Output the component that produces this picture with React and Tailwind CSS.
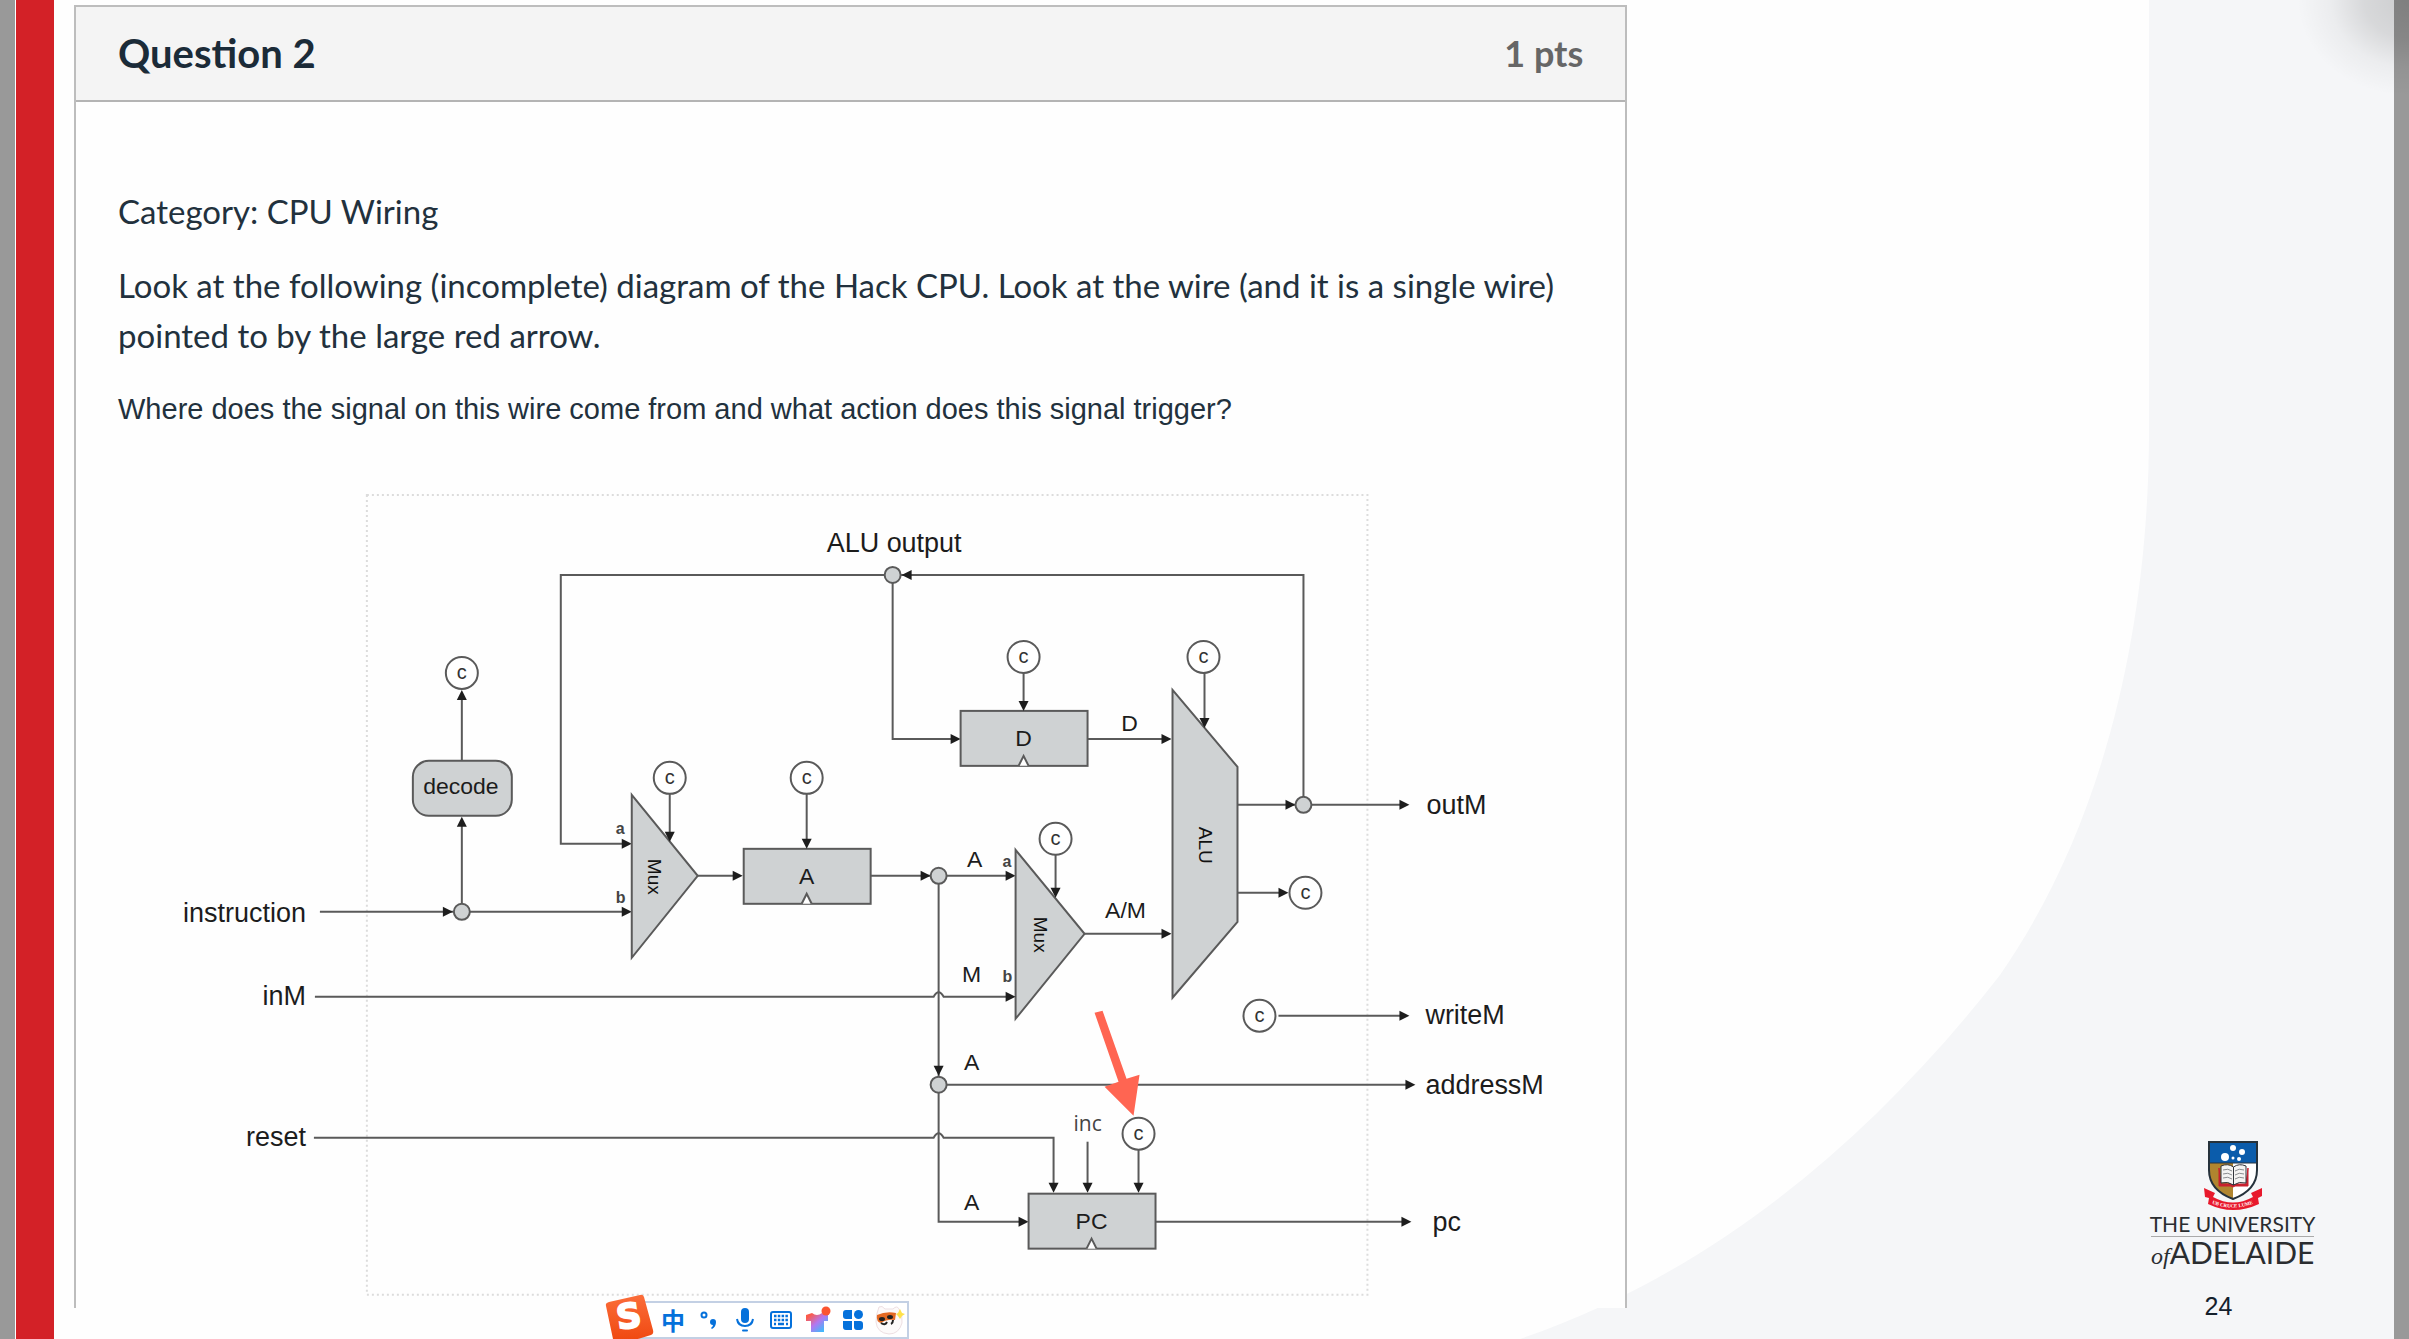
import React from "react";

const LINE = "#5a5a5a";
const FILL = "#cfd2d3";

const HEADS = {
  r: (x, y) => `${x},${y} ${x - 10},${y - 5} ${x - 10},${y + 5}`,
  l: (x, y) => `${x},${y} ${x + 10},${y - 5} ${x + 10},${y + 5}`,
  d: (x, y) => `${x},${y} ${x - 5},${y - 10} ${x + 5},${y - 10}`,
  u: (x, y) => `${x},${y} ${x - 5},${y + 10} ${x + 5},${y + 10}`,
};

function Head({ x, y, dir }) {
  return <polygon points={HEADS[dir](x, y)} fill="#1d1d1d" />;
}

function Wire({ d }) {
  return <path d={d} fill="none" stroke={LINE} strokeWidth="2" />;
}

function Node({ x, y }) {
  return <circle cx={x} cy={y} r="8" fill={FILL} stroke={LINE} strokeWidth="2" />;
}

function Control({ x, y }) {
  return (
    <g>
      <circle cx={x} cy={y} r="16" fill="#fff" stroke={LINE} strokeWidth="2" />
      <text x={x} y={y + 6} fontSize="20" textAnchor="middle" fill="#333">c</text>
    </g>
  );
}

function Register({ x, y, label }) {
  return (
    <g>
      <rect x={x} y={y} width="127" height="55" fill={FILL} stroke={LINE} strokeWidth="2" />
      <path d={`M${x + 58} ${y + 55} L${x + 63} ${y + 45} L${x + 68} ${y + 55}`} fill="#fff" stroke={LINE} strokeWidth="2" />
      <text x={x + 63} y={y + 35} fontSize="23" textAnchor="middle">{label}</text>
    </g>
  );
}

function Label({ x, y, size = 27, anchor = "start", children }) {
  return <text x={x} y={y} fontSize={size} textAnchor={anchor}>{children}</text>;
}

function Port({ x, y, children }) {
  return <text x={x} y={y} fontSize="16" fontWeight="700" fill="#444">{children}</text>;
}

function Vertical({ x, y, children }) {
  return <text x={x} y={y} fontSize="19" fill="#111" transform={`rotate(90 ${x} ${y})`}>{children}</text>;
}

function CpuDiagram() {
  return (
    <svg
      viewBox="76 470 1550 838"
      className="block w-full"
      role="img"
      aria-label="Hack CPU diagram"
      fontFamily='"Liberation Sans", Arial, sans-serif'
      fill="#1c1c1c"
    >
      <rect x="367" y="495" width="1001" height="800" fill="none" stroke="#dcdcdc" strokeWidth="2" strokeDasharray="2 3" />

      <Wire d="M462 912 V820" /><Head x={462} y={817} dir="u" />
      <Wire d="M462 761 V698" /><Head x={462} y={690} dir="u" />
      <Control x={462} y={673} />
      <rect x="413" y="761" width="99" height="55" rx="16" fill={FILL} stroke={LINE} strokeWidth="2" />
      <Label x={461} y={794} size={23} anchor="middle">decode</Label>

      <Wire d="M320 912 H628" /><Head x={453} y={912} dir="r" /><Head x={632} y={912} dir="r" />
      <Node x={462} y={912} />

      <Wire d="M1304 805 V575 H561 V844 H628" />
      <Head x={632} y={844} dir="r" /><Head x={902} y={575} dir="l" />
      <Wire d="M893 575 V739 H957" /><Head x={961} y={739} dir="r" />
      <Node x={893} y={575} />
      <Label x={827} y={552}>ALU output</Label>

      <polygon points="632,795 698,876 632,958" fill={FILL} stroke={LINE} strokeWidth="2" />
      <Wire d="M670 794 V836" /><Head x={670} y={842} dir="d" />
      <Control x={670} y={778} />
      <Vertical x={648} y={859}>Mux</Vertical>
      <Port x={616} y={834}>a</Port>
      <Port x={616} y={903}>b</Port>

      <Wire d="M698 876 H740" /><Head x={743} y={876} dir="r" />
      <Register x={744} y={849} label="A" />
      <Wire d="M807 794 V842" /><Head x={807} y={849} dir="d" />
      <Control x={807} y={778} />

      <Wire d="M939 876 V1222 H1025" /><Head x={1029} y={1222} dir="r" />
      <Wire d="M871 876 H1012" /><Head x={931} y={876} dir="r" /><Head x={1016} y={876} dir="r" />
      <Head x={939} y={1076} dir="d" />
      <Node x={939} y={876} />
      <Label x={975} y={867} size={23} anchor="middle">A</Label>
      <Label x={972} y={982} size={23} anchor="middle">M</Label>
      <Port x={1003} y={867}>a</Port>
      <Port x={1003} y={982}>b</Port>

      <polygon points="1016,850 1085,934 1016,1019" fill={FILL} stroke={LINE} strokeWidth="2" />
      <Wire d="M1056 855 V892" /><Head x={1056} y={898} dir="d" />
      <Control x={1056} y={839} />
      <Vertical x={1034} y={917}>Mux</Vertical>

      <Wire d="M315 997 H934 Q939 988 944 997 H1012" /><Head x={1016} y={997} dir="r" />

      <Register x={961} y={711} label="D" />
      <Wire d="M1024 673 V705" /><Head x={1024} y={711} dir="d" />
      <Control x={1024} y={657} />
      <Wire d="M1088 739 H1168" /><Head x={1172} y={739} dir="r" />
      <Label x={1130} y={731} size={23} anchor="middle">D</Label>
      <Wire d="M1085 934 H1168" /><Head x={1172} y={934} dir="r" />
      <Label x={1126} y={918} size={23} anchor="middle">A/M</Label>

      <polygon points="1173,690 1238,767 1238,922 1173,998" fill={FILL} stroke={LINE} strokeWidth="2" />
      <Wire d="M1205 673 V722" /><Head x={1205} y={728} dir="d" />
      <Control x={1204} y={657} />
      <Vertical x={1199} y={827}>ALU</Vertical>

      <Wire d="M1238 805 H1404" /><Head x={1296} y={805} dir="r" /><Head x={1410} y={805} dir="r" />
      <Node x={1304} y={805} />
      <Label x={1427} y={814}>outM</Label>
      <Wire d="M1238 893 H1284" /><Head x={1289} y={893} dir="r" />
      <Control x={1306} y={893} />

      <Wire d="M1279 1016 H1404" /><Head x={1410} y={1016} dir="r" />
      <Control x={1260} y={1016} />
      <Label x={1426} y={1024}>writeM</Label>

      <Wire d="M939 1085 H1410" /><Head x={1416} y={1085} dir="r" />
      <Node x={939} y={1085} />
      <Label x={1426} y={1094}>addressM</Label>
      <Label x={972} y={1070} size={23} anchor="middle">A</Label>

      <Wire d="M314 1138 H934 Q939 1129 944 1138 H1054 V1186" /><Head x={1054} y={1193} dir="d" />
      <Wire d="M1088 1142 V1186" /><Head x={1088} y={1193} dir="d" />
      <Wire d="M1139 1150 V1186" /><Head x={1139} y={1193} dir="d" />
      <Control x={1139} y={1134} />
      <text x="1074" y="1131" fontSize="21" fontFamily='"Open Sans", sans-serif' fill="#444">inc</text>
      <Register x={1029} y={1194} label="PC" />
      <Label x={972} y={1210} size={23} anchor="middle">A</Label>
      <Wire d="M1156 1222 H1406" /><Head x={1412} y={1222} dir="r" />
      <Label x={1433} y={1231}>pc</Label>

      <polygon points="1095,1013 1103,1011 1127,1079 1140,1075 1134,1116 1105,1087 1119,1082" fill="#ff6552" />

      <Label x={306} y={922} anchor="end">instruction</Label>
      <Label x={306} y={1005} anchor="end">inM</Label>
      <Label x={306} y={1146} anchor="end">reset</Label>
    </svg>
  );
}

function Crest() {
  return (
    <svg viewBox="0 0 60 72" className="h-[72px] w-[60px] overflow-visible" aria-hidden="true">
      <defs>
        <clipPath id="shield">
          <path d="M6 2 H54 V30 Q54 50 30 59 Q6 50 6 30 Z" />
        </clipPath>
      </defs>
      <g clipPath="url(#shield)">
        <rect x="4" y="0" width="52" height="24" fill="#0b5cab" />
        <rect x="4" y="23" width="26" height="40" fill="#b0852f" />
        <rect x="30" y="23" width="26" height="40" fill="#fff" />
      </g>
      <path d="M6 2 H54 V30 Q54 50 30 59 Q6 50 6 30 Z" fill="none" stroke="#26323c" strokeWidth="2" />
      <path d="M6 23 H54" stroke="#26323c" strokeWidth="1" />
      <g fill="#fff">
        <circle cx="22" cy="17" r="4" />
        <circle cx="30" cy="8" r="3" />
        <circle cx="39" cy="12" r="3" />
        <circle cx="30" cy="18" r="1.5" />
        <circle cx="36" cy="19" r="2" />
      </g>
      <path d="M16 28 V46 H28 Q30 48 32 46 H45 V28 L43 44 H18 Z" fill="#c8202f" stroke="#c8202f" strokeWidth="1" />
      <path d="M18 26 Q25 23 30.500 27 Q36 23 43 26 V43 Q36 41 30.500 45 Q25 41 18 43 Z" fill="#f4f4f2" stroke="#30343a" strokeWidth="1" />
      <path d="M30.500 27 V45" stroke="#30343a" strokeWidth="1" />
      <path d="M20 30 Q25 28 29 31 M20 34 Q25 32 29 35 M20 38 Q25 36 29 39 M32 31 Q36 28 41 30 M32 35 Q36 32 41 34 M32 39 Q36 36 41 38" fill="none" stroke="#8a8d90" strokeWidth="1" />
      <path d="M1 48 L12 53 L10 57 Q30 68 50 57 L48 53 L59 48 V56 L55 58 L56 64 Q30 76 5 64 L6 58 L2 57 Z" fill="#e8192c" />
      <path id="motto" d="M8 63 Q30 72 52 63" fill="none" />
      <text fontSize="5" fontWeight="700" fill="#fff" fontFamily='"Liberation Serif", serif'>
        <textPath href="#motto" startOffset="50%" textAnchor="middle">SUB CRUCE LUMEN</textPath>
      </text>
    </svg>
  );
}

function ImeButton({ label, children }) {
  return (
    <button type="button" aria-label={label} className="flex h-full w-9 items-center justify-center text-[#0571db]">
      {children}
    </button>
  );
}

function ImeBar() {
  return (
    <div className="absolute bottom-0 left-[605px] flex items-end" role="toolbar" aria-label="Input method">
      <svg viewBox="0 0 50 45" className="z-10 h-[45px] w-[50px] overflow-visible" aria-hidden="true">
        <defs>
          <linearGradient id="ime" x1="0" y1="0" x2="0" y2="1">
            <stop offset="0" stopColor="#fb6d3a" />
            <stop offset="1" stopColor="#f04a12" />
          </linearGradient>
        </defs>
        <path d="M4 8 L35 1 Q38 0 39 3 L48 36 Q49 40 46 41 L33 45 H8 L1 12 Q0 9 4 8 Z" fill="url(#ime)" />
        <text x="24" y="34" fontSize="34" fontWeight="700" textAnchor="middle" fill="#fff" stroke="#fff" strokeWidth="2" fontFamily='"DejaVu Sans", sans-serif' transform="rotate(-8 24 24)">S</text>
      </svg>
      <div className="-ml-4 flex h-[38px] border-2 border-[#c3d0e4] bg-white pl-3.5">
        <ImeButton label="Language">
          <span className="font-['Noto_Sans_CJK_SC',sans-serif] text-2xl leading-none font-bold">中</span>
        </ImeButton>
        <ImeButton label="Punctuation">
          <svg viewBox="0 0 18 20" className="h-5 w-[18px]">
            <circle cx="4" cy="5" r="2.500" fill="none" stroke="currentColor" strokeWidth="2" />
            <path d="M13 9 a3 3 0 0 1 3 3 q0 5 -4 7 l-1 -1 q2 -1.500 2 -3 a3 3 0 0 1 0 -6 Z" fill="currentColor" />
          </svg>
        </ImeButton>
        <ImeButton label="Voice">
          <svg viewBox="0 0 18 24" className="h-6 w-[18px]">
            <rect x="5" y="0" width="8" height="15" rx="4" fill="currentColor" />
            <path d="M1 11 Q2 18 9 18 Q16 18 17 11" fill="none" stroke="currentColor" strokeWidth="2" />
            <path d="M7 22.500 H11" stroke="currentColor" strokeWidth="2" strokeLinecap="round" />
          </svg>
        </ImeButton>
        <ImeButton label="Keyboard">
          <svg viewBox="0 0 22 18" className="h-[18px] w-[22px]" fill="none" stroke="currentColor">
            <rect x="1" y="1" width="20" height="16" rx="2" strokeWidth="2" />
            <path d="M4 5 H18 M4 9 H18" strokeWidth="2.500" strokeDasharray="2.500 1.300" />
            <path d="M4 13 H6 M8 13 H14 M16 13 H18" strokeWidth="2.500" />
          </svg>
        </ImeButton>
        <ImeButton label="Skin">
          <svg viewBox="0 0 28 28" className="h-7 w-7">
            <defs>
              <linearGradient id="skin" x1="0" y1="0" x2="1" y2="1">
                <stop offset="0.150" stopColor="#fb5b4b" />
                <stop offset="0.500" stopColor="#b377f0" />
                <stop offset="0.850" stopColor="#42b8fb" />
              </linearGradient>
            </defs>
            <path d="M3 9 L9 7 Q14 11 19 7 L25 9 V15 H21 V26 H8 V15 H3 Z" fill="url(#skin)" />
            <circle cx="23" cy="5" r="4.500" fill="#fb5430" />
          </svg>
        </ImeButton>
        <ImeButton label="Toolbox">
          <svg viewBox="0 0 20 20" className="size-5" fill="currentColor">
            <path d="M3 0 H9 V9 H3 Q0 9 0 6 V3 Q0 0 3 0 Z M0 11 H9 V20 H3 Q0 20 0 17 Z M11 11 H17 Q20 11 20 14 V17 Q20 20 17 20 H14 Q11 20 11 17 Z" />
            <circle cx="15.500" cy="4.500" r="4.500" />
          </svg>
        </ImeButton>
        <ImeButton label="Mascot">
          <svg viewBox="0 0 32 32" className="size-8">
            <path d="M6 3 Q9 1 12 5 H20 Q24 1 26 5 Q30 12 29 19 Q26 30 16 30 Q4 29 3 18 Q3 10 6 3 Z" fill="#fdfafa" stroke="#eddfe2" strokeWidth="1" />
            <path d="M4 11 Q13 7 23 9 L22 16 Q14 15 8 19 Q3 18 4 11 Z" fill="#e46a24" />
            <ellipse cx="9" cy="15" rx="3" ry="2" fill="#222" />
            <ellipse cx="17" cy="13" rx="3" ry="2" fill="#222" />
            <path d="M8 19 Q12 22 14 18 M18 20 Q20 19 20 16" fill="none" stroke="#222" strokeWidth="2" />
            <path d="M27 5 L29 9 L32 10 L29 12 L27 15 L25 12 L23 10 L25 9 Z" fill="#ffe14a" />
          </svg>
        </ImeButton>
      </div>
    </div>
  );
}

export default function App() {
  return (
    <div className="relative flex min-h-screen overflow-hidden bg-[#fefefe]">
      <svg viewBox="0 0 2409 1339" preserveAspectRatio="none" className="absolute inset-0 h-full w-full" aria-hidden="true">
        <path d="M2149 0 V430 C2149 630 2103 827 2000 975 C1870 1142 1710 1274 1520 1339 H2409 V0 Z" fill="#f5f6f8" />
      </svg>

      <div className="relative w-[15px] bg-[#999]" />
      <div className="relative ml-px w-[38px] bg-[#d32127]" />

      <main className="relative flex flex-1">
        <article className="mt-[5px] mb-[31px] ml-5 min-w-0 flex-[1552] self-start border-x-2 border-t-2 border-[#bdbdbd] bg-[#fefefe] font-['Lato',sans-serif] text-[#22313d]">
          <header className="flex h-[95px] items-center justify-between border-b-2 border-[#b4b4b4] bg-[#f4f4f4] px-[42px] pb-0.5">
            <h1 className="text-[40px] font-bold text-[#1b2b38]">Question 2</h1>
            <span className="text-4xl font-bold text-[#666]">1 pts</span>
          </header>
          <div className="flex flex-col gap-6 px-[42px] pt-[84px] text-[33px] leading-[50px]">
            <p>Category: CPU Wiring</p>
            <p>
              Look at the following (incomplete) diagram of the Hack CPU. Look at the wire (and it is a single wire) pointed to by the large red arrow.
            </p>
            <p className="font-['Liberation_Sans',Arial,sans-serif] text-[29px]">
              Where does the signal on this wire come from and what action does this signal trigger?
            </p>
          </div>
          <div className="pt-9">
            <CpuDiagram />
          </div>
        </article>

        <aside className="flex min-w-0 flex-[768] flex-col items-end justify-end pb-3.5 text-[#2a2d30]">
          <div className="mr-20 flex w-[163px] flex-col items-center font-['Lato',sans-serif]">
            <Crest />
            <p className="text-[21px] leading-6 whitespace-nowrap">THE UNIVERSITY</p>
            <p className="w-full border-t border-[#aaa] text-center text-[30px] leading-[30px] whitespace-nowrap">
              <span className="font-['Liberation_Serif',serif] text-2xl leading-6 italic">of</span>ADELAIDE
            </p>
            <p className="mt-5 mr-7 font-['Liberation_Sans',Arial,sans-serif] text-[25px] text-[#14202c]">24</p>
          </div>
        </aside>
      </main>

      <div className="relative w-[15px] bg-[#999]" />
      <div className="pointer-events-none absolute top-0 right-0 h-24 w-28 bg-[radial-gradient(ellipse_farthest-side_at_top_right,rgba(0,0,0,0.17),rgba(0,0,0,0.12)_40%,rgba(0,0,0,0.04)_70%,transparent_100%)]" />
      <ImeBar />
    </div>
  );
}
